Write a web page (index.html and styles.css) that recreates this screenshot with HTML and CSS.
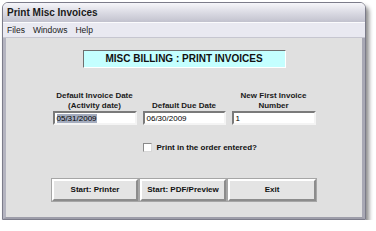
FILE: index.html
```html
<!DOCTYPE html>
<html lang="en">
<head>
  <meta charset="UTF-8" />
  <title>Print Misc Invoices</title>
  <link rel="stylesheet" href="styles.css">
</head>
<body>

<div class="window">
  <div class="titlebar">Print Misc Invoices</div>
  <div class="menubar">
    <span>Files</span>
    <span>Windows</span>
    <span>Help</span>
  </div>

  <div class="content">
    <div class="banner">MISC BILLING : PRINT INVOICES</div>

    <div class="fields">
      <div class="field">
        <label>Default Invoice Date<br>(Activity date)</label>
        <div class="input"><span class="selected">05/31/2009</span></div>
      </div>
      <div class="field">
        <label>Default Due Date</label>
        <div class="input">06/30/2009</div>
      </div>
      <div class="field">
        <label>New First Invoice<br>Number</label>
        <div class="input">1</div>
      </div>
    </div>

    <div class="check-row">
      <span class="checkbox"></span>
      <span>Print in the order entered?</span>
    </div>

    <div class="buttons">
      <div class="btn btn-printer">Start: Printer</div>
      <div class="btn btn-pdf">Start: PDF/Preview</div>
      <div class="btn btn-exit">Exit</div>
    </div>
  </div>
</div>

</body>
</html>
```

FILE: styles.css
```css
* {
  margin: 0;
  padding: 0;
  box-sizing: border-box;
}

body {
  background: #fff;
  font-family: 'Liberation Sans', Arial, sans-serif;
  color: #111;
}

.window {
  margin: 2px 0 0 2px;
  width: 364px;
  height: 218px;
  border: 1px solid #7c7c8a;
  border-radius: 6px 6px 0 0;
  box-shadow: 3px 4px 4px rgba(0, 0, 0, 0.45);
  display: flex;
  flex-direction: column;
  overflow: hidden;
}

.titlebar {
  height: 19px;
  line-height: 20px;
  padding-left: 4px;
  font-size: 10px;
  font-weight: bold;
  color: #1a1a1a;
  background: linear-gradient(#f6f6fa, #e0e0e8 40%, #c2c2ce);
}

.menubar {
  height: 16px;
  display: flex;
  align-items: center;
  gap: 8px;
  padding-left: 4px;
  font-size: 8.5px;
  color: #1a1a1a;
  background: #e9e9f1;
  border-top: 1px solid #fbfbfd;
  border-bottom: 1px solid #c6c6d0;
}

.content {
  flex: 1;
  display: flex;
  flex-direction: column;
  align-items: center;
  background: #e0e0e0;
  border-left: 3px solid #b4b4c0;
  border-right: 3px solid #a8a8b4;
  border-bottom: 2px solid #9e9eaa;
}

.banner {
  margin-top: 12px;
  width: 203px;
  height: 18px;
  line-height: 15px;
  text-align: center;
  font-size: 10px;
  font-weight: bold;
  background: #c4ffff;
  border: 1px solid #fff;
  border-top-color: #6e6e6e;
  border-left-color: #6e6e6e;
}

.fields {
  margin-top: 23px;
  display: grid;
  grid-template-columns: 84px 83px 84px;
  gap: 6px;
  align-items: end;
}

.field {
  display: flex;
  flex-direction: column;
  align-items: center;
}

.field label {
  font-size: 8px;
  font-weight: bold;
  line-height: 10px;
  text-align: center;
  color: #1a1a1a;
}

.input {
  width: 100%;
  height: 14px;
  line-height: 11px;
  padding-left: 2px;
  font-size: 8px;
  color: #000;
  background: #fff;
  border: 2px solid #fff;
  border-top-color: #7a7a7a;
  border-left-color: #7a7a7a;
  border-right-color: #f4f4f4;
  border-bottom-color: #f4f4f4;
}

.selected {
  background: #a4acbe;
}

.check-row {
  margin-top: 18px;
  width: 263px;
  padding-left: 90px;
  display: flex;
  align-items: center;
  gap: 5px;
  font-size: 8px;
  font-weight: bold;
}

.checkbox {
  width: 9px;
  height: 9px;
  background: #fff;
  border: 1px solid #8a8a8a;
  border-right-color: #d8d8d8;
  border-bottom-color: #d8d8d8;
}

.buttons {
  margin-top: 27px;
  display: flex;
  gap: 2px;
}

.btn {
  height: 22px;
  line-height: 18px;
  text-align: center;
  font-size: 8px;
  font-weight: bold;
  background: #e4e4e4;
  border: 2px solid #fff;
  border-right-color: #8c8c8c;
  border-bottom-color: #8c8c8c;
  outline: 1px solid #a6a6a6;
}

.btn-printer { width: 86px; }
.btn-pdf { width: 86px; }
.btn-exit { width: 88px; }
```
